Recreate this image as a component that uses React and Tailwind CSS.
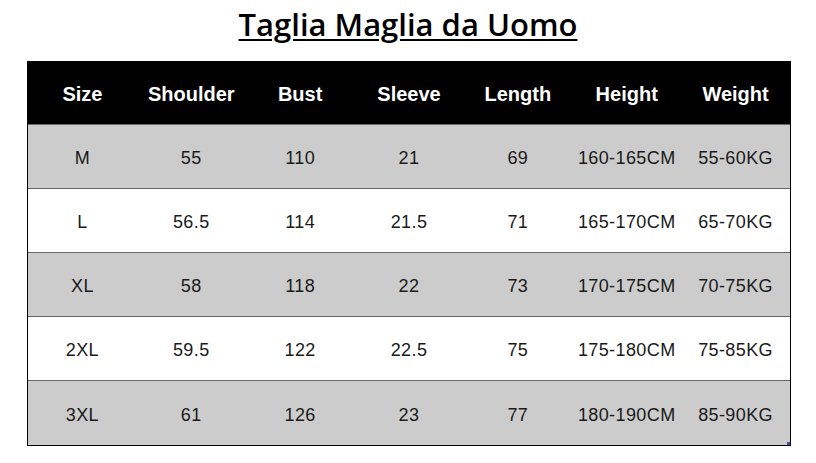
const headers = ['Size', 'Shoulder', 'Bust', 'Sleeve', 'Length', 'Height', 'Weight'];

const rows = [
  ['M', '55', '110', '21', '69', '160-165CM', '55-60KG'],
  ['L', '56.5', '114', '21.5', '71', '165-170CM', '65-70KG'],
  ['XL', '58', '118', '22', '73', '170-175CM', '70-75KG'],
  ['2XL', '59.5', '122', '22.5', '75', '175-180CM', '75-85KG'],
  ['3XL', '61', '126', '23', '77', '180-190CM', '85-90KG'],
];

export default function App() {
  return (
    <div className="w-[816px] h-[463px] bg-white overflow-hidden" style={{ fontFamily: '"Liberation Sans", Arial, sans-serif' }}>
      <div className="h-[61px] flex justify-center pt-[4px]">
        <h1
          className="text-[31px] font-semibold text-black underline underline-offset-[3px] decoration-[2px] leading-[40px]"
          style={{ fontFamily: '"Open Sans", "Noto Sans", sans-serif' }}
        >
          Taglia Maglia da Uomo
        </h1>
      </div>
      <div className="ml-[27px] w-[764px] border-x border-b border-black relative">
        <div className="grid grid-cols-7 h-[64px] bg-black text-white text-[20px] font-bold items-center border-b border-[#666] pt-[3px]">
          {headers.map((h) => (
            <div key={h} className="text-center">{h}</div>
          ))}
        </div>
        {rows.map((r, i) => (
          <div
            key={r[0]}
            className={`grid grid-cols-7 h-[64px] items-center text-[18px] tracking-[0.4px] text-[#1a1a1a] pt-[4px] ${i % 2 === 0 ? 'bg-[#cccccc]' : 'bg-white'} ${i < rows.length - 1 ? 'border-b border-[#666]' : ''}`}
          >
            {r.map((c, j) => (
              <div key={j} className="text-center">{c}</div>
            ))}
          </div>
        ))}
        <div className="absolute right-0 bottom-0 w-[3px] h-[3px] bg-[#3b4fa8]" />
      </div>
    </div>
  );
}
